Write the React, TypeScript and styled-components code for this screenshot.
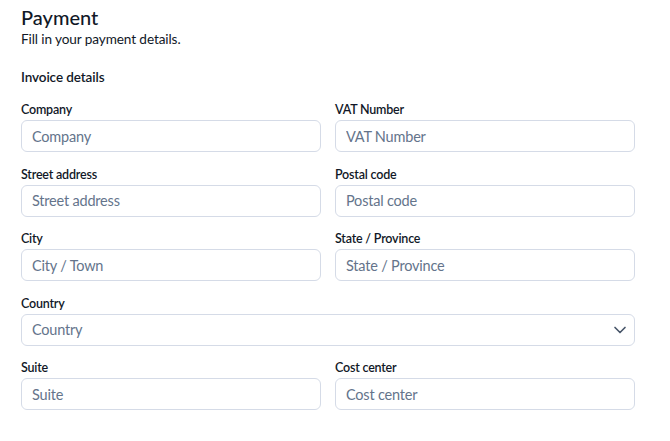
import React from 'react';
import styled, { createGlobalStyle } from 'styled-components';

const GlobalStyle = createGlobalStyle`
  body {
    margin: 0;
    background: #ffffff;
    font-family: Lato, "Noto Sans", sans-serif;
    color: #111827;
  }
`;

const Page = styled.div`
  width: 614px;
  padding: 4px 21px 0;
`;

const Title = styled.h1`
  margin: 0;
  font-size: 20px;
  font-weight: 500;
  line-height: 26px;
`;

const Subtitle = styled.p`
  margin: 0;
  font-size: 13.6px;
  letter-spacing: -0.1px;
  line-height: 18px;
`;

const Section = styled.h2`
  margin: 19px 0 0;
  font-size: 13.5px;
  font-weight: 600;
  letter-spacing: -0.1px;
  line-height: 20px;
`;

const Grid = styled.div`
  margin-top: 15px;
  display: grid;
  grid-template-columns: 1fr 1fr;
  column-gap: 14px;
  row-gap: 14.5px;
`;

const Field = styled.label<{ $wide?: boolean }>`
  display: flex;
  flex-direction: column;
  gap: 2px;
  grid-column: ${(p) => (p.$wide ? '1 / -1' : 'auto')};
`;

const Label = styled.span`
  font-size: 12.5px;
  font-weight: 600;
  letter-spacing: -0.2px;
  line-height: 16px;
  color: #111827;
`;

const Box = styled.div`
  position: relative;
  display: flex;
  align-items: center;
`;

const Input = styled.input`
  box-sizing: border-box;
  width: 100%;
  height: 32px;
  padding: 0 10px;
  border: 1px solid #d5dbe7;
  border-radius: 6px;
  font-family: inherit;
  font-size: 14.5px;
  letter-spacing: -0.2px;
  color: #111827;
  background: #fff;
  &::placeholder {
    color: #64748b;
  }
`;

const Select = styled.select`
  box-sizing: border-box;
  width: 100%;
  height: 32px;
  padding: 0 10px;
  border: 1px solid #d5dbe7;
  border-radius: 6px;
  font-family: inherit;
  font-size: 14.5px;
  letter-spacing: -0.2px;
  color: #64748b;
  background: #fff;
  appearance: none;
`;

const Chevron = styled.svg`
  position: absolute;
  right: 5px;
  pointer-events: none;
`;

const TextField = ({ label, placeholder }: { label: string; placeholder: string }) => (
  <Field>
    <Label>{label}</Label>
    <Input placeholder={placeholder} />
  </Field>
);

export default function App() {
  return (
    <>
      <GlobalStyle />
      <Page>
        <Title>Payment</Title>
        <Subtitle>Fill in your payment details.</Subtitle>
        <Section>Invoice details</Section>
        <Grid>
          <TextField label="Company" placeholder="Company" />
          <TextField label="VAT Number" placeholder="VAT Number" />
          <TextField label="Street address" placeholder="Street address" />
          <TextField label="Postal code" placeholder="Postal code" />
          <TextField label="City" placeholder="City / Town" />
          <TextField label="State / Province" placeholder="State / Province" />
          <Field $wide>
            <Label>Country</Label>
            <Box>
              <Select defaultValue="">
                <option value="" disabled>
                  Country
                </option>
              </Select>
              <Chevron width="20" height="20" viewBox="0 0 24 24" fill="none" stroke="#475569" strokeWidth="2" strokeLinecap="round" strokeLinejoin="round">
                <path d="M6 9l6 6 6-6" />
              </Chevron>
            </Box>
          </Field>
          <TextField label="Suite" placeholder="Suite" />
          <TextField label="Cost center" placeholder="Cost center" />
        </Grid>
      </Page>
    </>
  );
}
